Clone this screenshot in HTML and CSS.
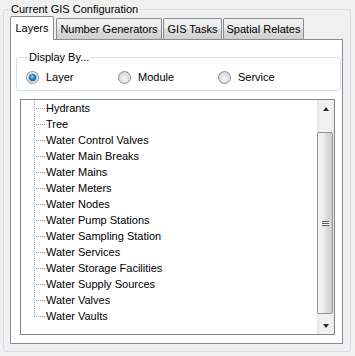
FILE: index.html
```html
<!DOCTYPE html>
<html>
<head>
<meta charset="utf-8">
<link rel="stylesheet" href="styles.css">
</head>
<body>
<div class="outer">
  <div class="outer-title">Current GIS Configuration</div>
  <div class="tabs">
    <div class="tab selected t1">Layers</div>
    <div class="tab t2">Number Generators</div>
    <div class="tab t3">GIS Tasks</div>
    <div class="tab t4">Spatial Relates</div>
  </div>
  <div class="panel">
    <div class="group">
      <div class="group-title">Display By...</div>
      <div class="radios">
        <div class="radio-item"><span class="radio checked"><span class="dot"></span></span><span class="rlabel">Layer</span></div>
        <div class="radio-item"><span class="radio"></span><span class="rlabel">Module</span></div>
        <div class="radio-item"><span class="radio"></span><span class="rlabel">Service</span></div>
      </div>
    </div>
    <div class="listbox">
      <div class="tree">
        <div class="row">Hydrants</div>
        <div class="row">Tree</div>
        <div class="row">Water Control Valves</div>
        <div class="row">Water Main Breaks</div>
        <div class="row">Water Mains</div>
        <div class="row">Water Meters</div>
        <div class="row">Water Nodes</div>
        <div class="row">Water Pump Stations</div>
        <div class="row">Water Sampling Station</div>
        <div class="row">Water Services</div>
        <div class="row">Water Storage Facilities</div>
        <div class="row">Water Supply Sources</div>
        <div class="row">Water Valves</div>
        <div class="row last">Water Vaults</div>
      </div>
      <div class="scrollbar">
        <div class="sbtn"><span class="arrow up"></span></div>
        <div class="track-top"></div>
        <div class="thumb"><span class="grip"></span></div>
        <div class="track-bottom"></div>
        <div class="sbtn"><span class="arrow down"></span></div>
      </div>
    </div>
  </div>
</div>
</body>
</html>
```

FILE: styles.css
```css
html, body {
  margin: 0;
  padding: 0;
  background: #f0f0f0;
}
body {
  font-family: "Liberation Sans", Arial, sans-serif;
  font-size: 11px;
  color: #000;
  width: 355px;
  height: 356px;
  overflow: hidden;
}
.outer {
  box-sizing: border-box;
  margin: 9px 0 0 3px;
  width: 348px;
  height: 343px;
  border: 1px solid #d5dfe5;
  border-radius: 3px;
}
.outer-title {
  display: block;
  width: max-content;
  margin: -7px 0 0 6px;
  padding: 0 2px 0 1px;
  line-height: 13px;
  height: 13px;
  background: #f0f0f0;
}
.tabs {
  display: flex;
  align-items: flex-end;
  gap: 1px;
  margin-left: 6px;
  height: 23px;
}
.tab {
  box-sizing: border-box;
  height: 21px;
  border: 1px solid #898c95;
  border-bottom: none;
  border-radius: 2px 2px 0 0;
  background: linear-gradient(to bottom, #f2f2f2 0%, #ebebeb 45%, #dddddd 50%, #cfcfcf 100%);
  text-align: center;
  line-height: 21px;
  white-space: nowrap;
}
.tab.selected {
  position: relative;
  height: 24px;
  margin-bottom: -1px;
  background: #ffffff;
  line-height: 22px;
  z-index: 1;
}
.t1 { width: 44px; margin-right: 1px; }
.t2 { width: 106px; }
.t3 { width: 59px; }
.t4 { width: 81px; }
.panel {
  box-sizing: border-box;
  margin-left: 6px;
  width: 333px;
  height: 305px;
  border: 1px solid #898c95;
  background: #ffffff;
  padding-top: 17px;
}
.group {
  box-sizing: border-box;
  margin-left: 5px;
  width: 325px;
  height: 34px;
  border: 1px solid #d5dfe5;
  border-radius: 3px;
}
.group-title {
  display: block;
  width: max-content;
  margin: -7px 0 0 11px;
  padding: 0 2px 0 1px;
  line-height: 13px;
  height: 13px;
  background: #ffffff;
}
.radios {
  display: grid;
  grid-template-columns: 92px 100px auto;
  margin: 7px 0 0 9px;
  height: 13px;
}
.radio-item {
  display: flex;
  align-items: center;
  height: 13px;
}
.radio {
  box-sizing: border-box;
  width: 13px;
  height: 13px;
  border-radius: 50%;
  border: 1px solid #8f8f8f;
  background: radial-gradient(circle at 50% 60%, #f6f6f6 0%, #e3e3e3 45%, #c9c9c9 100%);
  display: flex;
  align-items: center;
  justify-content: center;
  flex: none;
}
.radio.checked {
  background: radial-gradient(circle at 50% 50%, #ffffff 0%, #f0f0f0 60%, #cfcfcf 100%);
}
.dot {
  width: 7px;
  height: 7px;
  border-radius: 50%;
  background: radial-gradient(circle at 45% 40%, #9fe0ff 0%, #2d8ed6 35%, #0a4f9a 75%, #1f4a78 100%);
  box-shadow: 0 0 0 0.5px #5d8fb8;
}
.rlabel {
  margin-left: 7px;
  line-height: 13px;
}
.listbox {
  box-sizing: border-box;
  display: flex;
  margin: 8px 0 0 9px;
  width: 315px;
  height: 236px;
  border: 1px solid #828790;
  background: #ffffff;
}
.tree {
  flex: 1;
  min-width: 0;
}
.row {
  height: 16px;
  line-height: 16px;
  padding-left: 25px;
  white-space: nowrap;
  background-image:
    repeating-linear-gradient(to bottom, #a0a0a0 0 1px, transparent 1px 2px),
    repeating-linear-gradient(to right, #a0a0a0 0 1px, transparent 1px 2px);
  background-repeat: no-repeat, no-repeat;
  background-position: 13px 0, 15px 8px;
  background-size: 1px 16px, 9px 1px;
}
.row.last {
  background-size: 1px 9px, 9px 1px;
}
.scrollbar {
  width: 17px;
  flex: none;
  display: flex;
  flex-direction: column;
  background: linear-gradient(to right, #e3e3e3 0%, #f1f1f1 20%, #f1f1f1 80%, #e9e9e9 100%);
}
.sbtn {
  height: 17px;
  flex: none;
  display: flex;
  align-items: center;
  justify-content: center;
}
.arrow {
  width: 0;
  height: 0;
  border-left: 3.5px solid transparent;
  border-right: 3.5px solid transparent;
}
.arrow.up {
  border-bottom: 4px solid #2a2a2a;
}
.arrow.down {
  border-top: 4px solid #2a2a2a;
}
.track-top {
  height: 15px;
  flex: none;
}
.thumb {
  box-sizing: border-box;
  height: 182px;
  margin: 0 1px 0 0;
  border: 1px solid #959595;
  border-radius: 2px;
  background: linear-gradient(to right, #f5f5f5 0%, #ececec 40%, #dcdcdc 60%, #cdcdcd 100%);
  display: flex;
  align-items: center;
  justify-content: center;
  flex: none;
}
.grip {
  width: 7px;
  height: 5px;
  background: repeating-linear-gradient(to bottom, #5e5e5e 0 1px, #f4f4f4 1px 2px);
}
.track-bottom {
  flex: 1;
}
```
